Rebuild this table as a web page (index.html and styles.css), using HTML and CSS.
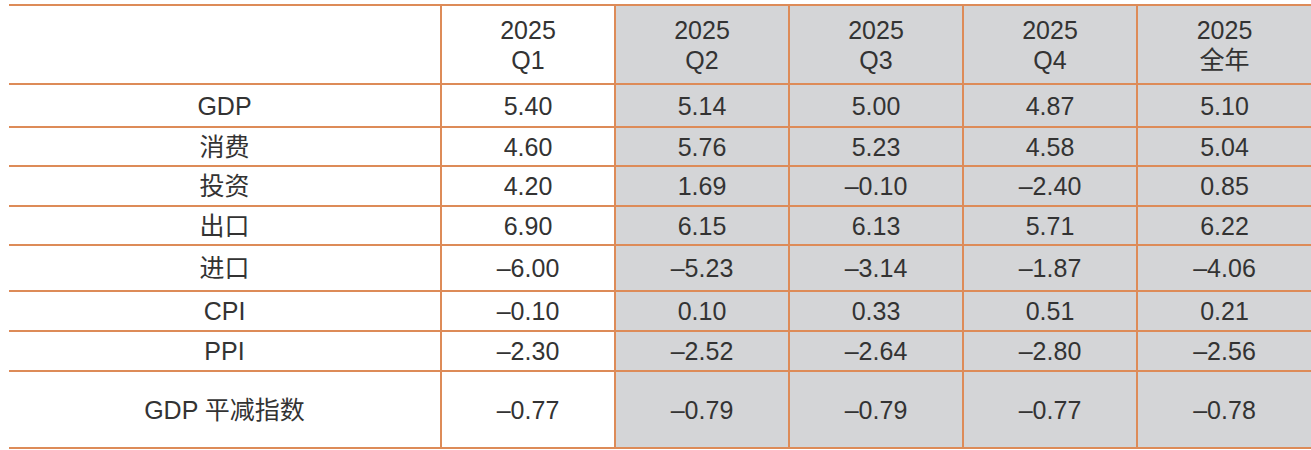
FILE: index.html
```html
<!DOCTYPE html>
<html lang="zh">
<head>
<meta charset="utf-8">
<title>2025 宏观指标</title>
<link rel="stylesheet" href="styles.css">
</head>
<body>
<table class="data">
  <colgroup>
    <col class="c-label">
    <col class="c-val">
    <col class="c-val">
    <col class="c-val">
    <col class="c-val">
    <col class="c-val">
  </colgroup>
  <thead>
    <tr class="r-head">
      <th></th>
      <th>2025<br>Q1</th>
      <th class="g">2025<br>Q2</th>
      <th class="g">2025<br>Q3</th>
      <th class="g">2025<br>Q4</th>
      <th class="g">2025<br>全年</th>
    </tr>
  </thead>
  <tbody>
    <tr class="r-43"><td>GDP</td><td>5.40</td><td class="g">5.14</td><td class="g">5.00</td><td class="g">4.87</td><td class="g">5.10</td></tr>
    <tr class="r-39"><td>消费</td><td>4.60</td><td class="g">5.76</td><td class="g">5.23</td><td class="g">4.58</td><td class="g">5.04</td></tr>
    <tr class="r-40"><td>投资</td><td>4.20</td><td class="g">1.69</td><td class="g">–0.10</td><td class="g">–2.40</td><td class="g">0.85</td></tr>
    <tr class="r-39"><td>出口</td><td>6.90</td><td class="g">6.15</td><td class="g">6.13</td><td class="g">5.71</td><td class="g">6.22</td></tr>
    <tr class="r-46"><td>进口</td><td>–6.00</td><td class="g">–5.23</td><td class="g">–3.14</td><td class="g">–1.87</td><td class="g">–4.06</td></tr>
    <tr class="r-40"><td>CPI</td><td>–0.10</td><td class="g">0.10</td><td class="g">0.33</td><td class="g">0.51</td><td class="g">0.21</td></tr>
    <tr class="r-40"><td>PPI</td><td>–2.30</td><td class="g">–2.52</td><td class="g">–2.64</td><td class="g">–2.80</td><td class="g">–2.56</td></tr>
    <tr class="r-77"><td>GDP 平减指数</td><td>–0.77</td><td class="g">–0.79</td><td class="g">–0.79</td><td class="g">–0.77</td><td class="g">–0.78</td></tr>
  </tbody>
</table>
</body>
</html>
```
FILE: styles.css
```css
html, body {
  margin: 0;
  padding: 0;
  background: #ffffff;
}

body {
  padding: 4px 0 0 9px;
  overflow: hidden;
}

.data {
  border-collapse: collapse;
  table-layout: fixed;
  width: 1302px;
  font-family: "Liberation Sans", Arial, "Noto Sans CJK SC", sans-serif;
  font-size: 25px;
  color: #333333;
  border-top: 2px solid #dd8b58;
  border-bottom: 2px solid #dd8b58;
}

.c-label { width: 432px; }
.c-val { width: 174px; }

.data th,
.data td {
  padding: 0;
  text-align: center;
  vertical-align: middle;
  font-weight: normal;
  border-top: 2px solid #dd8b58;
  border-left: 2px solid #dd8b58;
  line-height: 30px;
}

.data th:first-child,
.data td:first-child {
  border-left: none;
}

.data .g {
  background: #d4d5d7;
}

.r-head th { height: 77px; }
.r-43 td { height: 41px; }
.r-39 td { height: 37px; }
.r-40 td { height: 38px; }
.r-46 td { height: 44px; }
.r-77 td { height: 75px; }
```
